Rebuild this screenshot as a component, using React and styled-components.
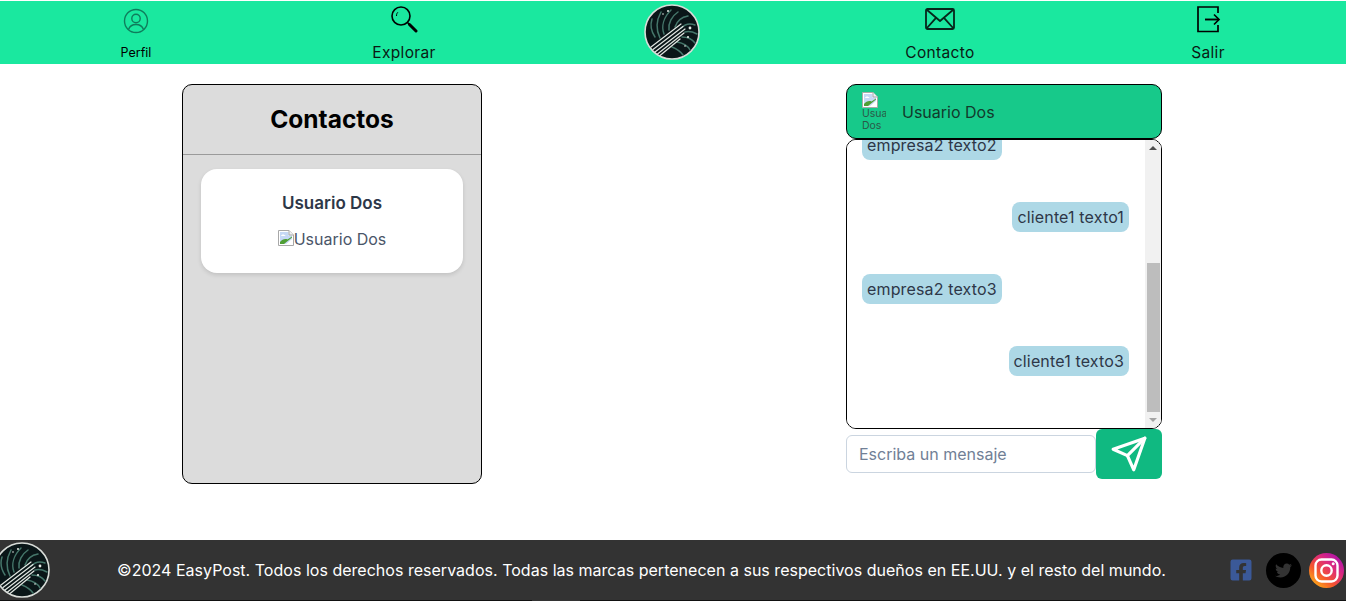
import React, { useEffect, useRef } from 'react';
import styled, { createGlobalStyle } from 'styled-components';
import { FaFacebookSquare, FaTwitter } from 'react-icons/fa';

const GlobalStyle = createGlobalStyle`
  html, body {
    margin: 0;
    padding: 0;
    background: #fff;
    overflow: hidden;
  }
  body {
    font-family: "Inter", "Liberation Sans", sans-serif;
    font-size: 16px;
  }
`;

const Page = styled.div`
  width: 1346px;
  height: 601px;
  padding-top: 1px;
  box-sizing: border-box;
  overflow: hidden;
`;

const Nav = styled.nav`
  display: grid;
  grid-template-columns: repeat(5, 268px);
  padding-left: 2px;
  height: 63px;
  background: #1ae89f;
`;
const NavItem = styled.a`
  display: flex;
  flex-direction: column;
  align-items: center;
  height: 63px;
  line-height: 20px;
  > svg { display: block; }
`;
const NavIconBox = styled.div`
  height: ${(p) => p.$height || 42}px;
  display: flex;
  align-items: flex-start;
  padding-top: ${(p) => p.$pad || 0}px;
  box-sizing: border-box;
`;
const NavLabel = styled.span`
  font-size: ${(p) => (p.$small ? 12.5 : 15.5)}px;
  letter-spacing: ${(p) => (p.$small ? 0 : 0.35)}px;
  color: ${(p) => (p.$small ? '#000' : '#0a1a14')};
`;
const NavLogo = styled.div`
  display: flex;
  justify-content: center;
  padding-top: 3px;
`;

const Main = styled.main`
  display: grid;
  grid-template-columns: 664px 664px;
  column-gap: 8px;
  align-items: start;
  height: 476px;
  padding-top: 20px;
  box-sizing: border-box;
`;

const Contacts = styled.section`
  justify-self: center;
  width: 300px;
  height: 400px;
  box-sizing: border-box;
  background: #dcdcdc;
  border: 1px solid #000;
  border-radius: 10px;
`;
const ContactsHead = styled.h2`
  margin: 0;
  height: 70px;
  box-sizing: border-box;
  padding-bottom: 2px;
  border-bottom: 1px solid #9a9a9a;
  display: flex;
  align-items: center;
  justify-content: center;
  font-size: 24.5px;
  font-weight: 700;
  color: #000;
`;
const ContactCard = styled.div`
  margin: 14px 18px 0;
  height: 104px;
  box-sizing: border-box;
  padding-top: 23px;
  background: #fff;
  border-radius: 16px;
  box-shadow: 0 2px 4px rgba(0, 0, 0, 0.12);
  text-align: center;
  color: #2d3748;
`;
const ContactName = styled.div`
  font-weight: 600;
  font-size: 17px;
  line-height: 22px;
`;
const BrokenImg = styled.span`
  display: inline-flex;
  align-items: flex-start;
  margin-top: 15px;
  line-height: 20px;
  color: #4a5568;
  font-size: 16px;
  > svg { margin-top: 1px; }
`;

const Chat = styled.section`
  justify-self: center;
  width: 316px;
  display: flex;
  flex-direction: column;
`;
const ChatHeader = styled.header`
  display: flex;
  align-items: center;
  gap: 16px;
  height: 55px;
  box-sizing: border-box;
  padding: 1px 0 0 15px;
  background: #17c98a;
  border: 1px solid #000;
  border-radius: 10px;
  color: #123a2c;
`;
const Avatar = styled.div`
  width: 24px;
  height: 40px;
  overflow: hidden;
  font-size: 10.5px;
  line-height: 12px;
  color: #2b5848;
  > svg { display: block; }
`;
const MessagesFrame = styled.div`
  position: relative;
  height: 290px;
`;
const Messages = styled.div`
  height: 100%;
  box-sizing: border-box;
  border: 1px solid #000;
  border-radius: 10px;
  overflow-y: scroll;
  padding: 55px 0 52px;
  display: flex;
  flex-direction: column;
  gap: 42px;
  background: #fff;
  scrollbar-width: none;
`;
const ScrollTrack = styled.div`
  position: absolute;
  top: 1px;
  right: 1px;
  bottom: 1px;
  width: 16px;
  display: flex;
  flex-direction: column;
  align-items: center;
  background: #f1f1f1;
  border-radius: 0 9px 9px 0;
`;
const ScrollArrow = styled.div`
  flex: none;
  width: 0;
  height: 0;
  margin: ${(p) => (p.$down ? '6px 0' : '6px 0 auto')};
  border-left: 4px solid transparent;
  border-right: 4px solid transparent;
  border-bottom: ${(p) => (p.$down ? 'none' : '4px solid #505050')};
  border-top: ${(p) => (p.$down ? '4px solid #a3a3a3' : 'none')};
`;
const ScrollThumb = styled.div`
  flex: none;
  width: 13px;
  height: 149px;
  background: #bdbdbd;
`;
const Bubble = styled.div`
  flex: none;
  align-self: ${(p) => (p.$mine ? 'flex-end' : 'flex-start')};
  margin: ${(p) => (p.$mine ? '0 32px 0 0' : '0 0 0 15px')};
  padding: 0 5px;
  height: 30px;
  line-height: 30px;
  border-radius: 8px;
  background: #add8e6;
  color: #2d3748;
  font-size: 16px;
  letter-spacing: 0.15px;
`;
const Composer = styled.form`
  display: flex;
  align-items: center;
  height: 50px;
  margin: 0;
`;
const Input = styled.input`
  width: 250px;
  height: 38px;
  box-sizing: border-box;
  padding: 0 12px;
  border: 1px solid #cbd5e0;
  border-radius: 6px;
  outline: none;
  font: inherit;
  &::placeholder { color: #718096; opacity: 1; }
`;
const SendButton = styled.button`
  width: 66px;
  height: 50px;
  display: flex;
  align-items: center;
  justify-content: center;
  padding: 0;
  border: none;
  border-radius: 6px;
  background: #10b981;
`;

const Footer = styled.footer`
  height: 60px;
  background: #333;
  display: flex;
  align-items: center;
  color: #fff;
  font-size: 16px;
  letter-spacing: 0.02px;
`;
const FooterLogo = styled.div`
  flex: none;
  margin-left: -6px;
  display: flex;
`;
const FooterText = styled.p`
  flex: none;
  margin: 0 0 0 67px;
  width: 1048px;
  white-space: nowrap;
  text-align: center;
`;
const Socials = styled.div`
  flex: none;
  display: flex;
  align-items: center;
  margin-left: 64px;
`;
const Facebook = styled.div`
  display: flex;
  color: #3b5998;
  margin-right: 13px;
`;
const Round = styled.div`
  width: 35px;
  height: 35px;
  border-radius: 50%;
  display: flex;
  align-items: center;
  justify-content: center;
  background: ${(p) => p.$bg};
  color: #333;
  margin-right: 8px;
  flex: none;
`;
const FooterEdge = styled.div`
  height: 1px;
  background: linear-gradient(90deg, #111 532px, #333 532px, #333 580px, #111 580px);
`;

const strands = [
  'M7 43 L37 20',
  'M9 45.5 L39 22.5',
  'M11 48 L41 25',
  'M13.5 50 L40 29',
  'M16 51.5 L36 35',
];
const fronds = [
  'M16 34 C12 26 12 17 17 8',
  'M20 30 C17 22 20 13 27 6',
  'M25 26 C24 19 28 12 34 8',
  'M31 23 C33 17 38 13 44 12',
  'M37 24 C41 20 46 19 51 21',
  'M41 28 C45 27 49 28 53 30',
  'M38 33 C43 33 48 35 51 39',
  'M33 38 C39 39 44 42 46 46',
  'M28 43 C33 45 37 48 39 51',
  'M11 33 C7 27 6 21 8 15',
];

const Logo = ({ size }) => (
  <svg width={size} height={size} viewBox="0 0 56 56">
    <circle cx="28" cy="28" r="27" fill="#0a1618" stroke="#d8dcd8" strokeWidth="1.6" />
    <g fill="none" stroke="#45766a" strokeWidth="1.5" strokeLinecap="round">
      {fronds.map((d) => <path key={d} d={d} />)}
    </g>
    <g fill="none" stroke="#e3e8e3" strokeWidth="1.2" strokeLinecap="round">
      {strands.map((d) => <path key={d} d={d} />)}
    </g>
    <g fill="#e6ebe6">
      <circle cx="24" cy="7" r="1" />
      <circle cx="19" cy="10" r="0.8" />
      <circle cx="46" cy="24" r="1.4" />
      <circle cx="44" cy="33" r="1.1" />
      <circle cx="41" cy="42" r="0.8" />
    </g>
  </svg>
);

const BrokenIcon = () => (
  <svg width="16" height="16" viewBox="0 0 16 16">
    <path d="M0.5 0.5H11L15.5 5V15.5H0.5Z" fill="#fff" stroke="#a8a8a8" />
    <path d="M2 2H10.5V5.5H14V9L8 14H2Z" fill="#c5d8f5" />
    <path d="M2 14V12C4 9.5 7 8.5 9.5 9.5L14 6.5V7.5L6 14Z" fill="#4f9f34" />
    <path d="M3 6C3.5 4 6.5 4 7.5 6Z" fill="#fff" />
    <path d="M11 0.5V5H15.5" fill="#eef1f4" stroke="#a8a8a8" />
  </svg>
);

const ProfileIcon = () => (
  <svg width="26" height="26" viewBox="0 0 26 26" fill="none" stroke="#0f7d5c" strokeWidth="1.4">
    <circle cx="13" cy="13" r="11.5" />
    <circle cx="13" cy="10.5" r="4.2" />
    <path d="M5.5 21.5C7 17.5 10 16.5 13 16.5S19 17.5 20.5 21.5" />
  </svg>
);
const SearchIcon = () => (
  <svg width="28" height="28" viewBox="0 0 28 28" fill="none" stroke="#000">
    <circle cx="11" cy="11" r="9" strokeWidth="1.6" />
    <path d="M17.5 17.5L19.5 19.5" strokeWidth="1.6" />
    <path d="M19.5 19.5L26 26" strokeWidth="3" strokeLinecap="round" />
    <path d="M6.5 11C6.5 9 7 8 8 7.2" strokeWidth="1" />
  </svg>
);
const MailIcon = () => (
  <svg width="30" height="22" viewBox="0 0 30 22" fill="none" stroke="#07261c" strokeWidth="1.8" strokeLinejoin="round">
    <rect x="1" y="1" width="28" height="20" rx="1.5" />
    <path d="M1.5 1.5L15 13L28.5 1.5" />
    <path d="M1.5 20.5L11 9.8M28.5 20.5L19 9.8" />
  </svg>
);
const ExitIcon = () => (
  <svg width="26" height="28" viewBox="0 0 26 28" fill="none" stroke="#000" strokeWidth="1.7">
    <path d="M23 8V2H3V26.5H23V20" />
    <path d="M10 14.5H23.5" strokeWidth="1.9" />
    <path d="M19 9.5L24 14.5L19 19.5" strokeWidth="1.7" />
  </svg>
);
const PlaneIcon = () => (
  <svg width="38" height="38" viewBox="0 0 24 24" fill="none" stroke="#fff" strokeWidth="2" strokeLinecap="round" strokeLinejoin="round">
    <path d="M22 2L15 22L11 13L2 9Z" />
    <path d="M22 2L11 13" />
  </svg>
);
const InstagramIcon = () => (
  <svg width="35" height="35" viewBox="0 0 35 35">
    <defs>
      <linearGradient id="insta" x1="0.1" y1="0.95" x2="0.9" y2="0.05">
        <stop offset="0" stopColor="#fdb515" />
        <stop offset="0.35" stopColor="#f5542e" />
        <stop offset="0.65" stopColor="#dd2a7b" />
        <stop offset="1" stopColor="#a80fb4" />
      </linearGradient>
    </defs>
    <circle cx="17.5" cy="17.5" r="17.5" fill="url(#insta)" />
    <rect x="6.5" y="6.5" width="22" height="22" rx="6" fill="none" stroke="#fff" strokeWidth="2.4" />
    <circle cx="17.5" cy="17.5" r="5.2" fill="none" stroke="#fff" strokeWidth="2.4" />
    <circle cx="24.2" cy="10.8" r="1.5" fill="#fff" />
  </svg>
);

const messages = [
  { text: 'empresa2 texto1' },
  { text: 'cliente1 texto0', mine: true },
  { text: 'empresa2 texto2' },
  { text: 'cliente1 texto1', mine: true },
  { text: 'empresa2 texto3' },
  { text: 'cliente1 texto3', mine: true },
];

export default function App() {
  const listRef = useRef(null);

  useEffect(() => {
    listRef.current.scrollTop = listRef.current.scrollHeight;
  }, []);

  return (
    <Page>
      <GlobalStyle />
      <Nav>
        <NavItem>
          <NavIconBox $pad={7}><ProfileIcon /></NavIconBox>
          <NavLabel $small>Perfil</NavLabel>
        </NavItem>
        <NavItem>
          <NavIconBox $pad={4}><SearchIcon /></NavIconBox>
          <NavLabel>Explorar</NavLabel>
        </NavItem>
        <NavLogo><Logo size={56} /></NavLogo>
        <NavItem>
          <NavIconBox $pad={7}><MailIcon /></NavIconBox>
          <NavLabel>Contacto</NavLabel>
        </NavItem>
        <NavItem>
          <NavIconBox $pad={4}><ExitIcon /></NavIconBox>
          <NavLabel>Salir</NavLabel>
        </NavItem>
      </Nav>

      <Main>
        <Contacts>
          <ContactsHead>Contactos</ContactsHead>
          <ContactCard>
            <ContactName>Usuario Dos</ContactName>
            <BrokenImg><BrokenIcon />Usuario Dos</BrokenImg>
          </ContactCard>
        </Contacts>

        <Chat>
          <ChatHeader>
            <Avatar><BrokenIcon />Usuario Dos</Avatar>
            Usuario Dos
          </ChatHeader>
          <MessagesFrame>
            <Messages ref={listRef}>
              {messages.map((m) => (
                <Bubble key={m.text} $mine={m.mine}>{m.text}</Bubble>
              ))}
            </Messages>
            <ScrollTrack>
              <ScrollArrow />
              <ScrollThumb />
              <ScrollArrow $down />
            </ScrollTrack>
          </MessagesFrame>
          <Composer>
            <Input placeholder="Escriba un mensaje" />
            <SendButton type="button"><PlaneIcon /></SendButton>
          </Composer>
        </Chat>
      </Main>

      <Footer>
        <FooterLogo><Logo size={56} /></FooterLogo>
        <FooterText>©2024 EasyPost. Todos los derechos reservados. Todas las marcas pertenecen a sus respectivos dueños en EE.UU. y el resto del mundo.</FooterText>
        <Socials>
          <Facebook><FaFacebookSquare size={24} /></Facebook>
          <Round $bg="#000"><FaTwitter size={17} /></Round>
          <InstagramIcon />
        </Socials>
      </Footer>
      <FooterEdge />
    </Page>
  );
}
